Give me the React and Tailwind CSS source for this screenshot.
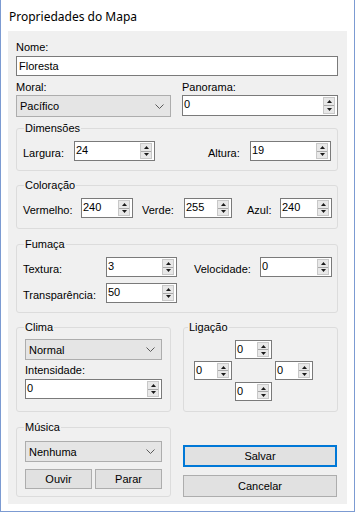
import React from "react";

function Spin() {
  return (
    <div className="my-[1px] mr-[2px] flex w-[12px] flex-col border border-[#c8c8c8] bg-[#e8e8e8]">
      <div className="flex flex-1 items-center justify-center border-b border-[#a8a8a8]">
        <svg width="5" height="3" viewBox="0 0 5 3"><path d="M2.5 0L5 3H0z" fill="#1a1a1a" /></svg>
      </div>
      <div className="flex flex-1 items-center justify-center">
        <svg width="5" height="3" viewBox="0 0 5 3"><path d="M0 0H5L2.5 3z" fill="#1a1a1a" /></svg>
      </div>
    </div>
  );
}

function Num({ v, cls }) {
  return (
    <div className={`flex border border-[#7a7a7a] bg-white ${cls}`}>
      <div className="flex-1 pl-[1px] pt-[1px] leading-[14px]">{v}</div>
      <Spin />
    </div>
  );
}

function Chevron() {
  return (
    <svg width="9" height="5" viewBox="0 0 9 5" className="shrink-0">
      <path d="M0.5 0.5L4.5 4.5L8.5 0.5" fill="none" stroke="#5a5a5a" strokeWidth="1" />
    </svg>
  );
}

function Combo({ v, cls }) {
  return (
    <div className={`flex items-center justify-between border border-[#adadad] bg-[#e5e5e5] pl-[3px] pr-[6px] ${cls}`}>
      <span className="leading-[16px]">{v}</span>
      <Chevron />
    </div>
  );
}

function Btn({ children, cls }) {
  return (
    <div className={`flex items-center justify-center bg-[#e1e1e1] leading-[16px] ${cls}`}>{children}</div>
  );
}

function Group({ title, cls, lg = "ml-[7px]", children }) {
  return (
    <fieldset className={`rounded-[3px] border border-[#dcdcdc] ${cls}`}>
      <legend className={`px-[1px] leading-[15px] ${lg}`}>{title}</legend>
      {children}
    </fieldset>
  );
}

export default function App() {
  return (
    <div className="flex h-[512px] w-[355px] flex-col border-x border-b border-[#7c9bd2] bg-white font-['Liberation_Sans',Arial,sans-serif] text-[11px] text-black">
      <div className="flex h-[31px] items-center pl-[8px] pt-[2px] font-['Noto_Sans',sans-serif] text-[12px]">Propriedades do Mapa</div>
      <div className="mx-[7px] h-[473px] bg-[#f0f0f0] pl-[8px] pr-[9px] pt-[8px]">
        <div className="h-[17px] leading-[16px]">Nome:</div>
        <div className="h-[20px] border border-[#7a7a7a] bg-white pl-[2px] pt-[1px] leading-[16px]">Floresta</div>

        <div className="mt-[3px] flex">
          <div className="w-[155px]">
            <div className="h-[16px] leading-[16px]">Moral:</div>
            <Combo v="Pacífico" cls="h-[22px]" />
          </div>
          <div className="ml-[11px] flex-1">
            <div className="h-[16px] leading-[16px]">Panorama:</div>
            <Num v="0" cls="h-[21px]" />
          </div>
        </div>

        <Group title="Dimensões" cls="mt-[4px] pt-[5px] pb-[9px]">
          <div className="flex items-end pl-[6px]">
            <div className="w-[51px] leading-[16px]">Largura:</div>
            <Num v="24" cls="h-[20px] w-[81px]" />
            <div className="ml-[53px] w-[42px] leading-[16px]">Altura:</div>
            <Num v="19" cls="h-[20px] w-[81px]" />
          </div>
        </Group>

        <Group title="Coloração" cls="mt-[7px] pt-[5px] pb-[10px]">
          <div className="flex items-end pl-[6px]">
            <div className="w-[58px] leading-[16px]">Vermelho:</div>
            <Num v="240" cls="h-[20px] w-[52px]" />
            <div className="ml-[9px] w-[42px] leading-[16px]">Verde:</div>
            <Num v="255" cls="h-[20px] w-[48px]" />
            <div className="ml-[15px] w-[33px] leading-[16px]">Azul:</div>
            <Num v="240" cls="h-[20px] w-[52px]" />
          </div>
        </Group>

        <Group title="Fumaça" cls="mt-[8px] pt-[5px] pb-[9px]">
          <div className="pl-[6px]">
            <div className="flex items-end">
              <div className="w-[83px] leading-[16px]">Textura:</div>
              <Num v="3" cls="h-[20px] w-[71px]" />
              <div className="ml-[17px] w-[66px] leading-[16px]">Velocidade:</div>
              <Num v="0" cls="h-[20px] w-[72px]" />
            </div>
            <div className="mt-[6px] flex items-end">
              <div className="w-[83px] leading-[16px]">Transparência:</div>
              <Num v="50" cls="h-[20px] w-[71px]" />
            </div>
          </div>
        </Group>

        <div className="mt-[7px] flex">
          <div className="w-[155px]">
            <Group title="Clima" cls="pt-[4px] pb-[12px]">
              <div className="px-[8px]">
                <Combo v="Normal" cls="h-[21px]" />
                <div className="mt-[2px] h-[16px] leading-[16px]">Intensidade:</div>
                <Num v="0" cls="mt-[1px] h-[20px]" />
              </div>
            </Group>
            <Group title="Música" cls="mt-[8px] pt-[6px] pb-[7px]">
              <div className="px-[8px]">
                <Combo v="Nenhuma" cls="h-[21px]" />
                <div className="mt-[7px] flex gap-[3px]">
                  <Btn cls="h-[20px] w-[67px] border border-[#adadad]">Ouvir</Btn>
                  <Btn cls="h-[20px] flex-1 border border-[#adadad]">Parar</Btn>
                </div>
              </div>
            </Group>
          </div>
          <div className="ml-[12px] flex-1">
            <Group title="Ligação" lg="ml-[4px]" cls="pt-[5px] pb-[10px]">
              <div className="grid grid-cols-[38px_37px_38px] grid-rows-[19px_19px_19px] gap-x-[3px] gap-y-[2px] pl-[10px]">
                <div />
                <Num v="0" cls="h-[19px]" />
                <div />
                <Num v="0" cls="h-[19px]" />
                <div />
                <Num v="0" cls="h-[19px]" />
                <div />
                <Num v="0" cls="h-[19px]" />
                <div />
              </div>
            </Group>
            <Btn cls="mt-[33px] h-[22px] w-[154px] border-2 border-[#0078d7]">Salvar</Btn>
            <Btn cls="mt-[8px] h-[22px] w-[154px] border border-[#adadad]">Cancelar</Btn>
          </div>
        </div>
      </div>
    </div>
  );
}
